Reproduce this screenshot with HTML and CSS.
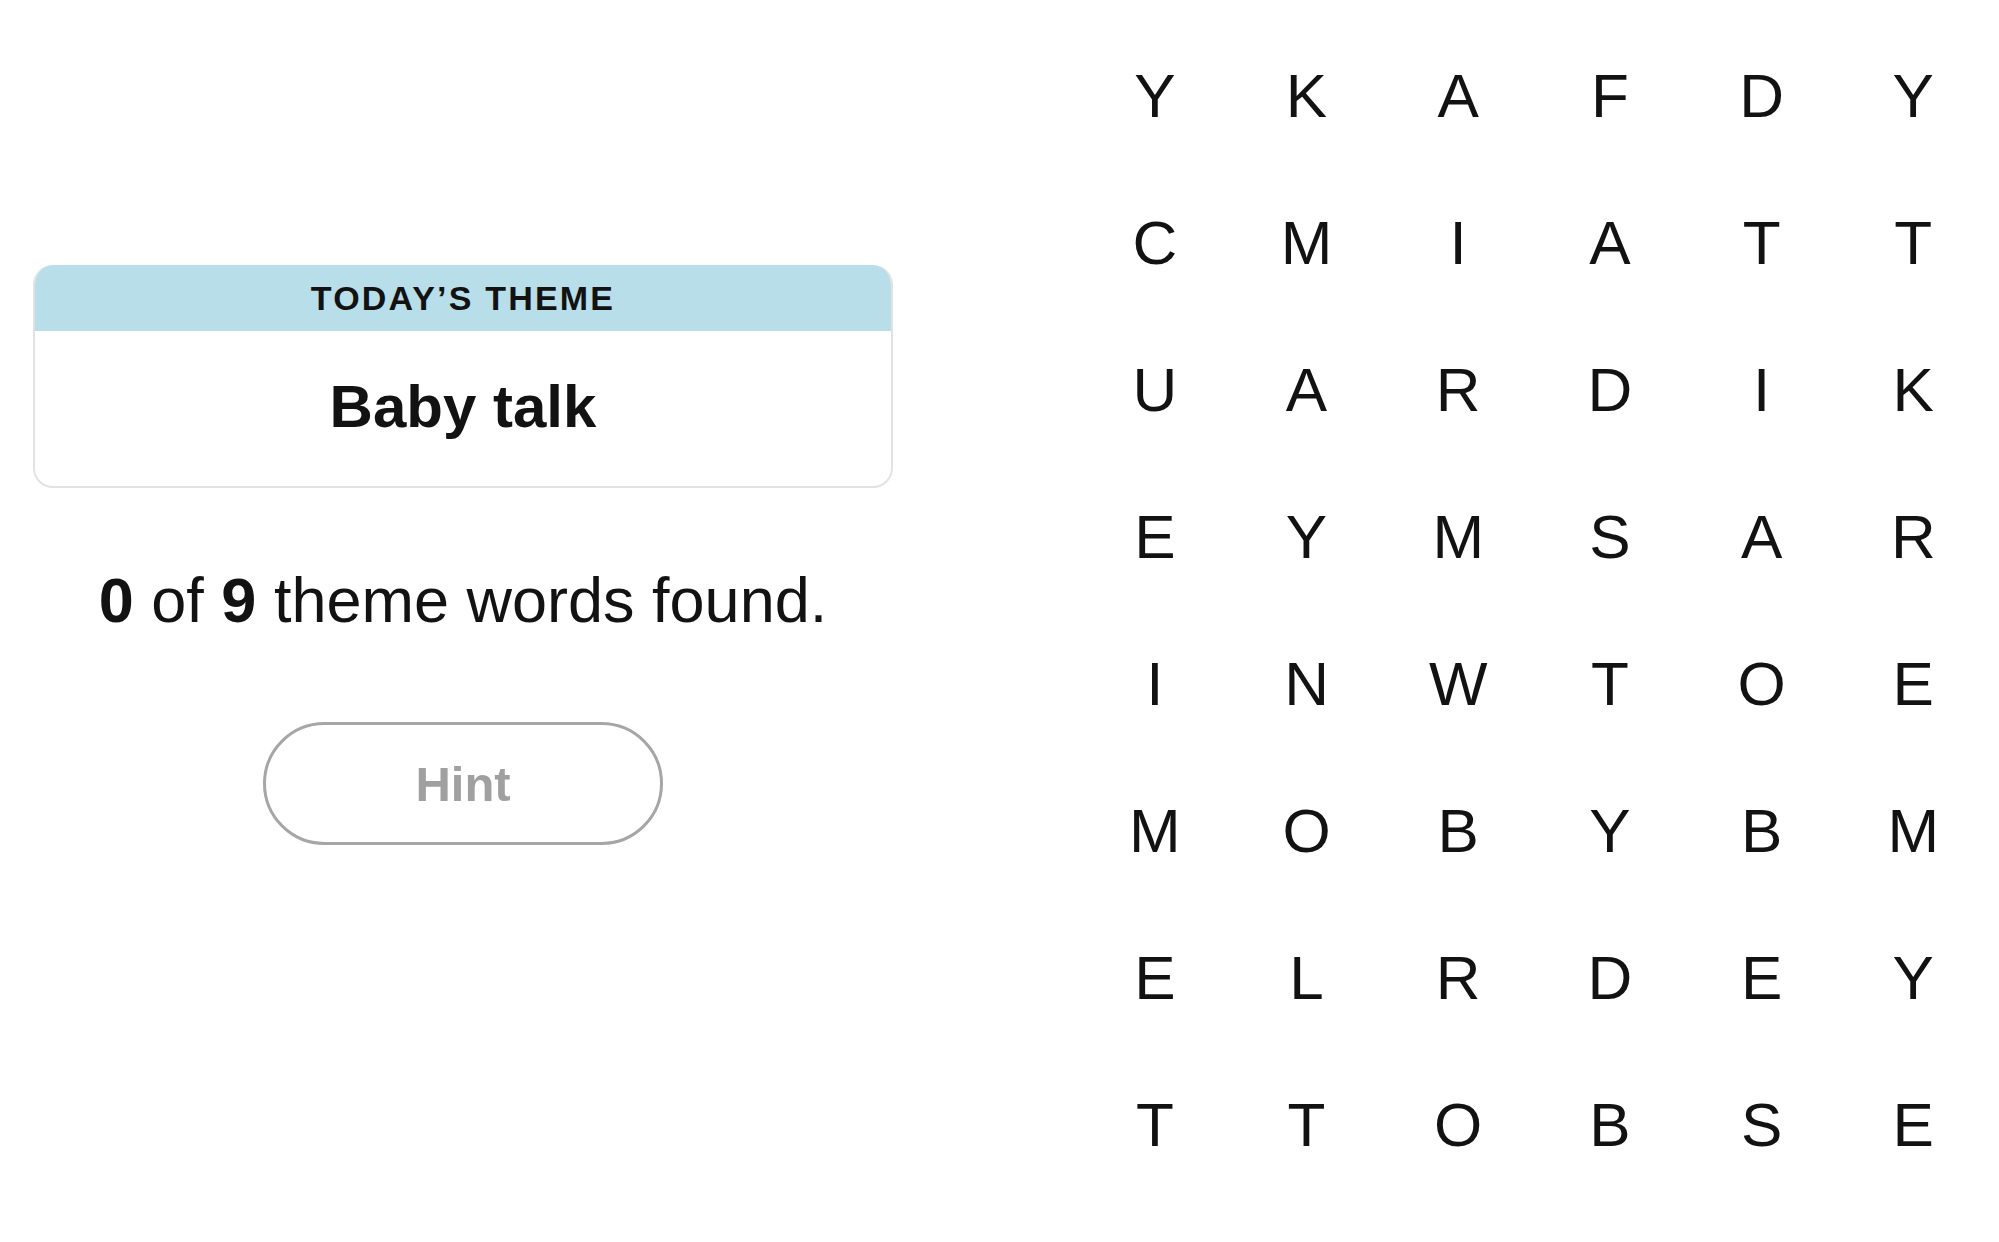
FILE: index.html
```html
<!DOCTYPE html>
<html lang="en">
<head>
    <meta charset="UTF-8">
    <meta name="viewport" content="width=device-width, initial-scale=1.0">
    <title>Strands</title>
    <link rel="stylesheet" href="styles.css">
</head>
<body>
    <div class="page">
        <div class="panel">
            <div class="theme-card">
                <div class="theme-head">TODAY’S THEME</div>
                <div class="theme-body">Baby talk</div>
            </div>

            <p class="count"><b>0</b> of <b>9</b> theme words found.</p>

            <button class="hint" disabled>Hint</button>
        </div>

        <div class="board">
            <span>Y</span><span>K</span><span>A</span><span>F</span><span>D</span><span>Y</span>
            <span>C</span><span>M</span><span>I</span><span>A</span><span>T</span><span>T</span>
            <span>U</span><span>A</span><span>R</span><span>D</span><span>I</span><span>K</span>
            <span>E</span><span>Y</span><span>M</span><span>S</span><span>A</span><span>R</span>
            <span>I</span><span>N</span><span>W</span><span>T</span><span>O</span><span>E</span>
            <span>M</span><span>O</span><span>B</span><span>Y</span><span>B</span><span>M</span>
            <span>E</span><span>L</span><span>R</span><span>D</span><span>E</span><span>Y</span>
            <span>T</span><span>T</span><span>O</span><span>B</span><span>S</span><span>E</span>
        </div>
    </div>
</body>
</html>
```

FILE: styles.css
```css
body, html {
    margin: 0;
    padding: 0;
    background: #fff;
    color: #121212;
    font-family: "Liberation Sans", Arial, sans-serif;
}

.page {
    display: flex;
    align-items: flex-start;
}

.panel {
    width: 860px;
    margin-left: 33px;
    padding-top: 265px;
    display: flex;
    flex-direction: column;
    align-items: center;
}

.theme-card {
    width: 860px;
    box-sizing: border-box;
    border: 2px solid #e2e2e2;
    border-top: none;
    border-radius: 20px;
    overflow: hidden;
}

.theme-head {
    height: 66px;
    margin: 0 -2px;
    background-color: #b8deea;
    display: flex;
    align-items: center;
    justify-content: center;
    font-size: 34px;
    font-weight: 700;
    letter-spacing: 2.2px;
}

.theme-body {
    height: 155px;
    padding-bottom: 4px;
    box-sizing: border-box;
    display: flex;
    align-items: center;
    justify-content: center;
    font-size: 60px;
    font-weight: 700;
}

.count {
    margin: 76px 0 0;
    font-size: 63px;
    line-height: 72px;
}

.hint {
    margin-top: 86px;
    width: 400px;
    height: 123px;
    background: #fff;
    border: 3px solid #a6a6a6;
    border-radius: 62px;
    color: #a0a0a0;
    font-family: inherit;
    font-size: 49px;
    font-weight: 700;
}

.board {
    margin-left: 186px;
    padding-top: 22px;
    display: grid;
    grid-template-columns: repeat(6, 151.7px);
    grid-auto-rows: 147px;
    font-size: 62px;
}

.board span {
    display: flex;
    align-items: center;
    justify-content: center;
}
```
